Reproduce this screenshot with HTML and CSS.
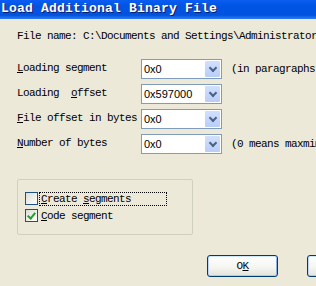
FILE: index.html
```html
<!DOCTYPE html>
<html lang="en">
<head>
  <meta charset="UTF-8">
  <title>Load Additional Binary File</title>
  <link rel="stylesheet" href="styles.css">
</head>
<body>
  <div class="window">
    <div class="titlebar">Load Additional Binary File</div>

    <div class="content">
      <p class="filename">File name: C:\Documents and Settings\Administrator\My Documents\dump.bin</p>

      <div class="fields">
        <label class="label"><u>L</u>oading segment</label>
        <div class="combo"><span class="value">0x0</span><span class="drop"></span></div>
        <span class="note">(in paragraphs)</span>

        <label class="label">Loading&nbsp; <u>o</u>ffset</label>
        <div class="combo"><span class="value">0x597000</span><span class="drop"></span></div>
        <span class="note"></span>

        <label class="label"><u>F</u>ile offset in bytes</label>
        <div class="combo"><span class="value">0x0</span><span class="drop"></span></div>
        <span class="note"></span>

        <label class="label"><u>N</u>umber of bytes</label>
        <div class="combo"><span class="value">0x0</span><span class="drop"></span></div>
        <span class="note">(0 means maxmimum)</span>
      </div>

      <div class="group">
        <div class="check-row focused">
          <span class="checkbox"></span>
          <span class="check-label"><u>C</u>reate <u>s</u>egments</span>
        </div>
        <div class="check-row">
          <span class="checkbox checked"></span>
          <span class="check-label"><u>C</u>ode segment</span>
        </div>
      </div>

      <div class="buttons">
        <button class="btn">O<u>K</u></button>
        <button class="btn">Cancel</button>
      </div>
    </div>
  </div>
</body>
</html>
```

FILE: styles.css
```css
body {
  margin: 0;
  padding: 0;
  background: #ece9d8;
  overflow: hidden;
  font-family: "Liberation Mono", monospace;
  color: #000;
}

.window {
  width: 390px;
}

/* XP blue caption */
.titlebar {
  height: 19px;
  line-height: 17px;
  padding-left: 1px;
  background: linear-gradient(#0a5df0, #0055e5 30%, #0052de 80%, #2f7ef2);
  color: #fff;
  font-weight: bold;
  font-size: 13px;
  letter-spacing: 0.2px;
  text-shadow: 1px 1px 0 #0a1e6e;
  white-space: nowrap;
}

.content {
  padding: 11px 0 0 17px;
}

.filename {
  margin: 0;
  height: 12px;
  line-height: 12px;
  font-size: 11px;
  letter-spacing: -0.6px;
  white-space: nowrap;
}

.fields {
  display: grid;
  grid-template-columns: 124px 81px auto;
  row-gap: 5px;
  align-items: center;
  margin-top: 17px;
}

.label {
  font-size: 11px;
  letter-spacing: -0.6px;
  white-space: nowrap;
  margin-top: -2px;
}

.note {
  font-size: 11px;
  letter-spacing: -0.6px;
  white-space: nowrap;
  padding-left: 9px;
}

.combo {
  height: 18px;
  border: 1px solid #7f9db9;
  background: #fff;
  display: flex;
  align-items: center;
  justify-content: space-between;
  padding: 0 1px 0 1px;
}
.combo .value {
  font-family: "Liberation Sans", sans-serif;
  font-size: 11px;
  padding-left: 1px;
}
.combo .drop {
  width: 15px;
  height: 16px;
  border-radius: 1px;
  background: linear-gradient(#d2e0fd, #b9cdf8);
  position: relative;
}
.combo .drop::after {
  content: "";
  position: absolute;
  left: 5px;
  top: 4px;
  width: 4px;
  height: 4px;
  border-right: 2px solid #4d6185;
  border-bottom: 2px solid #4d6185;
  transform: rotate(45deg);
}

/* Group box */
.group {
  width: 160px;
  margin-top: 25px;
  border: 1px solid #d0d0bf;
  border-radius: 2px;
  padding: 12px 7px 12px 7px;
  display: flex;
  flex-direction: column;
  gap: 4px;
}

.check-row {
  display: flex;
  align-items: center;
  height: 13px;
}

.checkbox {
  width: 11px;
  height: 11px;
  border: 1px solid #1c5180;
  background: linear-gradient(135deg, #dcdcd7, #fff);
  position: relative;
  flex: none;
}
.checkbox.checked::after {
  content: "";
  position: absolute;
  left: 3px;
  top: 1px;
  width: 3px;
  height: 6px;
  border-right: 2px solid #21a121;
  border-bottom: 2px solid #21a121;
  transform: rotate(40deg);
}

.check-label {
  font-size: 11px;
  letter-spacing: -0.6px;
  padding: 0 1px;
  margin-left: 1px;
  white-space: nowrap;
  line-height: 12px;
  border: 1px solid transparent;
}
.focused .check-label {
  border: 1px dotted #000;
  width: 124px;
}

.buttons {
  display: flex;
  justify-content: flex-end;
  gap: 29px;
  margin-top: 20px;
  padding-right: 12px;
}

.btn {
  width: 71px;
  height: 22px;
  border: 1px solid #003c74;
  border-radius: 3px;
  background: linear-gradient(#fff, #f4f4f0 60%, #e3e2da);
  box-shadow: inset 0 -1px 0 #c6c5d7, inset 0 1px 0 #cee7ff, inset 1px 0 0 #bcd4f6, inset -1px 0 0 #89ade4;
  font-family: "Liberation Mono", monospace;
  font-size: 11px;
  letter-spacing: -0.6px;
  padding: 0;
  color: #000;
}
```
